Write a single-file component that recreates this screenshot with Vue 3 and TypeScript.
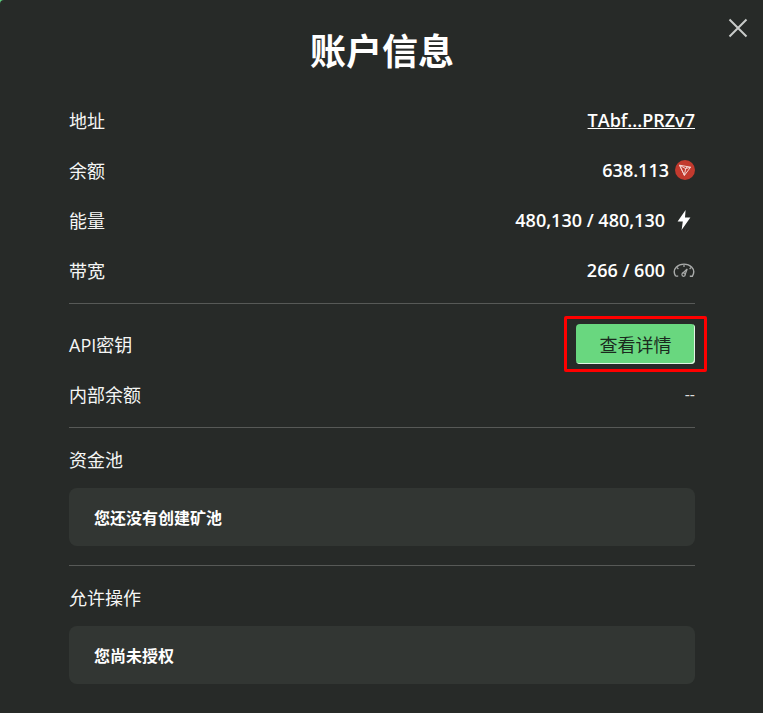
<script setup lang="ts">
interface Row { label: string; value: string; icon?: string; link?: boolean }
const stats: Row[] = [
  { label: '地址', value: 'TAbf...PRZv7', link: true },
  { label: '余额', value: '638.113', icon: 'trx' },
  { label: '能量', value: '480,130 / 480,130', icon: 'bolt' },
  { label: '带宽', value: '266 / 600', icon: 'gauge' },
]
</script>

<template>
  <div class="page">
    <main class="modal">
      <button class="close" aria-label="关闭">
        <svg width="20" height="20" viewBox="0 0 20 20"><path d="M1.5 1.5 18.5 18.5M18.5 1.5 1.5 18.5" stroke="#c9cbca" stroke-width="2" fill="none" /></svg>
      </button>
      <h1 class="title">账户信息</h1>

      <section class="group">
        <div v-for="row in stats" :key="row.label" class="row">
          <span class="label">{{ row.label }}</span>
          <span class="value" :class="{ link: row.link }">
            <span>{{ row.value }}</span>
            <svg v-if="row.icon === 'trx'" class="trx" width="20" height="20" viewBox="0 0 20 20">
              <circle cx="10" cy="10" r="10" fill="#c23a2e" />
              <path d="M4.6 5.2 15.6 7.2 9.4 15.4ZM4.6 5.2 9.4 15.4 10.6 8.6ZM10.6 8.6 15.6 7.2M10.6 8.6 12.6 6.6" fill="none" stroke="#f3d6d2" stroke-width="1" stroke-linejoin="round" />
            </svg>
            <svg v-else-if="row.icon === 'bolt'" class="bolt" width="14" height="20" viewBox="0 0 14 20">
              <path d="M8.6 0 .6 11.4H5.8L4.6 20 13.4 7.6H8Z" fill="#fff" />
            </svg>
            <svg v-else-if="row.icon === 'gauge'" class="gauge" width="22" height="14" viewBox="0 0 22 14">
              <path d="M2.6 13.2C.6 9.8 1 6.4 3.4 4 7.2.2 14.8.2 18.6 4c2.400 2.400 2.800 5.800.8 9.200H16.800" fill="none" stroke="#a9abaa" stroke-width="1.400" />
              <path d="M2.600 13.200H5.200M3.800 4.400 5.400 6M11 1.800V4M18.200 4.400 16.600 6" fill="none" stroke="#a9abaa" stroke-width="1.200" />
              <path d="M9.400 10.400 14.200 6 12 11.800" fill="none" stroke="#a9abaa" stroke-width="1.200" />
              <circle cx="10.600" cy="11.600" r="1.700" fill="none" stroke="#a9abaa" stroke-width="1.200" />
            </svg>
          </span>
        </div>
      </section>

      <section class="group api">
        <div class="row">
          <span class="label">API密钥</span>
          <span class="highlight"><button class="details">查看详情</button></span>
        </div>
        <div class="row">
          <span class="label">内部余额</span>
          <span class="value dash">--</span>
        </div>
      </section>

      <section class="group block">
        <h2 class="label heading">资金池</h2>
        <div class="card">您还没有创建矿池</div>
      </section>

      <section class="group block last">
        <h2 class="label heading">允许操作</h2>
        <div class="card">您尚未授权</div>
      </section>
    </main>
  </div>
</template>

<style>
html, body { margin: 0; background: #272a28; }
</style>

<style scoped>
.page {
  width: 763px;
  height: 713px;
  overflow: hidden;
  background: #5fd07f;
}
.modal {
  position: relative;
  box-sizing: border-box;
  height: 713px;
  padding: 0 68px 0 69px;
  background: #272a28;
  border-top-left-radius: 4px;
  color: #fff;
  font-family: "Open Sans", "Noto Sans CJK SC", sans-serif;
}
.close {
  position: absolute;
  top: 18px;
  right: 15px;
  width: 20px;
  height: 20px;
  padding: 0;
  border: 0;
  background: none;
  line-height: 0;
}
.title {
  margin: 0;
  padding-top: 26px;
  height: 70px;
  box-sizing: content-box;
  height: 52px;
  font-size: 36px;
  line-height: 52px;
  font-weight: 700;
  text-align: center;
}
.group {
  border-bottom: 1px solid #575957;
}
.group:first-of-type { padding-top: 0; }
.title + .group { padding: 17px 0 8px; }
.row {
  display: flex;
  align-items: center;
  justify-content: space-between;
  height: 50px;
}
.label {
  font-size: 18px;
  font-weight: 400;
  color: #f5f6f5;
}
.value {
  display: flex;
  align-items: center;
  font-size: 18px;
  font-weight: 600;
}
.link > span { text-decoration: underline; }
.trx { margin-left: 6px; }
.bolt { margin-left: 12px; margin-right: 4px; }
.gauge { margin-left: 8px; }
.dash { font-weight: 400; font-size: 16px; color: #ddd; }
.api { padding: 15px 0 8px; }
.highlight {
  display: block;
  margin-right: -12px;
  padding: 5px 9px;
  border: 3px solid #f00;
  border-radius: 2px;
  line-height: 0;
}
.details {
  width: 119px;
  height: 40px;
  padding: 0;
  border: 0;
  border-radius: 4px;
  background: #69d77f;
  box-shadow: inset -1px -1px 0 #e4f5e6;
  color: #1a2a1e;
  font: 400 18px "Open Sans", "Noto Sans CJK SC", sans-serif;
}
.block { padding: 17px 0 19px; }
.last { border-bottom: 0; }
.heading {
  margin: 0 0 13px;
  font-size: 18px;
  line-height: 30px;
}
.card {
  box-sizing: border-box;
  height: 58px;
  padding: 0 25px;
  display: flex;
  align-items: center;
  border-radius: 8px;
  background: #323633;
  font-size: 16px;
  font-weight: 700;
}
</style>
